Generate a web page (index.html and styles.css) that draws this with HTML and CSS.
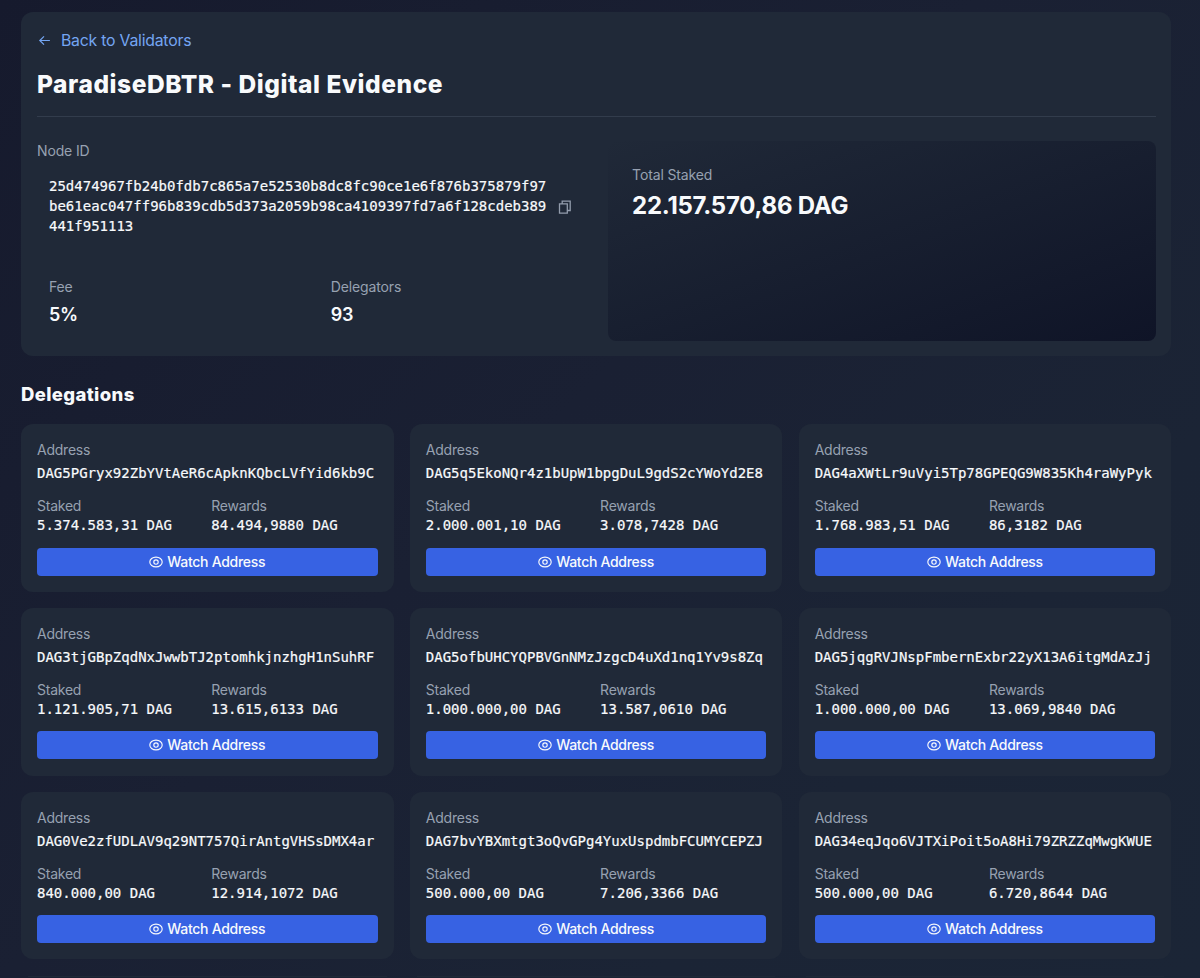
FILE: index.html
```
<!DOCTYPE html>
<html lang="en">
<head>
<meta charset="utf-8">
<title>ParadiseDBTR - Digital Evidence</title>
<link rel="stylesheet" href="styles.css">
</head>
<body>
<svg class="sprite" aria-hidden="true">
  <symbol id="eye" viewBox="0 0 14 14"><ellipse cx="7" cy="7" rx="6.200" ry="4.900"/><circle cx="7" cy="7" r="2.200"/></symbol>
</svg>
<main class="page">
  <section class="panel">
    <a class="back"><svg class="back-icon" viewBox="0 0 14 14"><path d="M11.900 6.500H1.800M6 2.300 1.800 6.500 6 10.700"/></svg><span>Back to Validators</span></a>
    <h1 class="title">ParadiseDBTR - Digital Evidence</h1>
    <div class="overview">
      <div class="node">
        <div class="label">Node ID</div>
        <div class="node-id">
          <span class="hash">25d474967fb24b0fdb7c865a7e52530b8dc8fc90ce1e6f876b375879f97be61eac047ff96b839cdb5d373a2059b98ca4109397fd7a6f128cdeb389441f951113</span>
          <svg class="copy-icon" viewBox="0 0 14 14"><path d="M4.200 3.700V1.200h8v9.300H9.500M1.500 3.900h7.800v9.200H1.500z"/></svg>
        </div>
        <div class="stats">
          <div class="stat-cell"><div class="label">Fee</div><div class="stat">5%</div></div>
          <div class="stat-cell"><div class="label">Delegators</div><div class="stat">93</div></div>
        </div>
      </div>
      <div class="total">
        <div class="label">Total Staked</div>
        <div class="total-value">22.157.570,86 DAG</div>
      </div>
    </div>
  </section>
  <h2 class="subtitle">Delegations</h2>
  <section class="grid" id="grid"></section>
</main>
<script src="app.js"></script>
</body>
</html>
```
FILE: styles.css
```
* { box-sizing: border-box; }
body {
  margin: 0;
  height: 978px;
  overflow: hidden;
  background: linear-gradient(135deg, #161a2d 0%, #1a2033 45%, #1b2435 75%, #1b2536 100%);
  color: #f8fafc;
  font: 14px/20px Inter, sans-serif;
}
.sprite { display: none; }
.page { padding: 12px 28.800px 0 21px; }
.panel {
  height: 344px;
  padding: 16px 15.500px 16px 16px;
  border-radius: 12px;
  background: #202938;
}
.back {
  display: flex;
  align-items: center;
  gap: 9px;
  height: 25px;
  padding-left: 1px;
  color: #74a5f2;
  font-size: 15.800px;
  letter-spacing: -0.220px;
}
.back-icon { width: 14px; height: 14px; fill: none; stroke: currentColor; stroke-width: 1.200; }
.title {
  height: 64px;
  margin: 0 0 24px;
  padding-top: 15.500px;
  border-bottom: 1px solid #323c4c;
  font-size: 24.500px;
  line-height: 31px;
  font-weight: 800;
  letter-spacing: 0.560px;
  white-space: nowrap;
}
.overview { display: grid; grid-template-columns: 1fr 1fr; gap: 23.500px; height: 200px; }
.label { color: #97a1b1; font-size: 14px; line-height: 20px; letter-spacing: -0.130px; }
.node-id { display: flex; align-items: center; gap: 11px; padding: 16px 12px 0; }
.hash {
  width: 497.500px;
  flex: none;
  word-break: break-all;
  font: 14px/19.800px "DejaVu Sans Mono", monospace;
  -webkit-text-stroke: 0.200px currentColor;
}
.copy-icon { width: 14px; height: 14px; flex: none; fill: none; stroke: #929cac; stroke-width: 1.300; }
.stats { display: grid; grid-template-columns: 1fr 1fr; gap: 16px; margin-top: 40.500px; }
.stat-cell { padding: 0 12px; }
.stat { padding-top: 4px; font-size: 18px; line-height: 28px; font-weight: 600; letter-spacing: -0.200px; }
.total {
  padding: 24px;
  border-radius: 8px;
  background: linear-gradient(to bottom right, #202938, #0f1427);
}
.total-value { padding-top: 5px; font-size: 24px; line-height: 32px; font-weight: 700; letter-spacing: -0.260px; white-space: nowrap; }
.subtitle { margin: 24px 0 16.400px; font-size: 18.500px; line-height: 28px; font-weight: 800; letter-spacing: 0.360px; }
.grid { display: grid; grid-template-columns: repeat(3, 1fr); gap: 16.300px; }
.card { height: 167.500px; padding: 15.600px 16px; border-radius: 12px; background: #202938; }
.card .label { letter-spacing: -0.240px; }
.card-edge { height: 1.700px; margin: 0 7px; padding: 0; border-radius: 0; }
.mono { font: 14px/20px "DejaVu Sans Mono", monospace; -webkit-text-stroke: 0.200px currentColor; white-space: nowrap; }
.address { padding-top: 3px; }
.amounts { display: grid; grid-template-columns: 1fr 1fr; gap: 8px; margin: 13px 0 13.700px; }
.amounts .mono { line-height: 18px; }
.watch {
  display: flex;
  align-items: center;
  justify-content: center;
  gap: 4px;
  width: 100%;
  height: 28px;
  padding: 0;
  border: 0;
  border-radius: 4px;
  background: #3762e3;
  color: #f8fafc;
  font: 500 14px/20px Inter, sans-serif;
  letter-spacing: -0.300px;
}
.eye-icon { width: 14px; height: 14px; fill: none; stroke: currentColor; stroke-width: 1.150; }
```
FILE: app.js
```
const delegations = [
  ["DAG5PGryx92ZbYVtAeR6cApknKQbcLVfYid6kb9C", "5.374.583,31", "84.494,9880"],
  ["DAG5q5EkoNQr4z1bUpW1bpgDuL9gdS2cYWoYd2E8", "2.000.001,10", "3.078,7428"],
  ["DAG4aXWtLr9uVyi5Tp78GPEQG9W835Kh4raWyPyk", "1.768.983,51", "86,3182"],
  ["DAG3tjGBpZqdNxJwwbTJ2ptomhkjnzhgH1nSuhRF", "1.121.905,71", "13.615,6133"],
  ["DAG5ofbUHCYQPBVGnNMzJzgcD4uXd1nq1Yv9s8Zq", "1.000.000,00", "13.587,0610"],
  ["DAG5jqgRVJNspFmbernExbr22yX13A6itgMdAzJj", "1.000.000,00", "13.069,9840"],
  ["DAG0Ve2zfUDLAV9q29NT757QirAntgVHSsDMX4ar", "840.000,00", "12.914,1072"],
  ["DAG7bvYBXmtgt3oQvGPg4YuxUspdmbFCUMYCEPZJ", "500.000,00", "7.206,3366"],
  ["DAG34eqJqo6VJTXiPoit5oA8Hi79ZRZZqMwgKWUE", "500.000,00", "6.720,8644"]
];

const card = ([address, staked, rewards]) => `
  <article class="card">
    <div class="label">Address</div>
    <div class="mono address">${address}</div>
    <div class="amounts">
      <div><div class="label">Staked</div><div class="mono">${staked} DAG</div></div>
      <div><div class="label">Rewards</div><div class="mono">${rewards} DAG</div></div>
    </div>
    <button class="watch"><svg class="eye-icon"><use href="#eye"/></svg>Watch Address</button>
  </article>`;

document.getElementById("grid").innerHTML =
  delegations.map(card).join("") + '<article class="card card-edge"></article>'.repeat(3);
```
